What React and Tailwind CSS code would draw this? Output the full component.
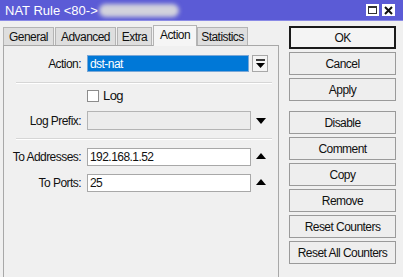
import React from 'react';

const tabs = [
  { name: 'General', w: 'w-[51px]' },
  { name: 'Advanced', w: 'w-[61px]' },
  { name: 'Extra', w: 'w-[35px]' },
  { name: 'Action', w: 'w-[44px]', active: true },
  { name: 'Statistics', w: 'w-[51px]' },
];

const buttons = ['OK', 'Cancel', 'Apply', 'Disable', 'Comment', 'Copy', 'Remove', 'Reset Counters', 'Reset All Counters'];

const TriDown = () => (
  <svg width="10" height="6" viewBox="0 0 10 6"><path d="M0 0h10L5 6z" fill="#000" /></svg>
);

const TriUp = () => (
  <svg width="10" height="6" viewBox="0 0 10 6"><path d="M0 6h10L5 0z" fill="#000" /></svg>
);

const Separator = () => (
  <div className="ml-[12px] mr-[6px] h-[2px] border-t border-[#d6d6d6] border-b-white border-b" />
);

const App = () => {
  return (
    <div className="w-[403px] h-[277px] bg-[#f0f0f0] flex flex-col overflow-hidden text-[12px] tracking-[-0.55px] text-[#111]" style={{ fontFamily: '"Liberation Sans", Arial, sans-serif' }}>
      {/* Title bar */}
      <div className="h-[21px] bg-[#5b5bd6] flex items-center pl-[5px] pr-[8px] border-b border-[#8a8ae6] shrink-0 tracking-normal">
        <span className="text-white text-[13px] leading-none">NAT Rule &lt;80-&gt;</span>
        <div className="ml-[1px] w-[80px] h-[13px] rounded-full bg-[#d2d2dc] blur-[2px]" />
        <div className="ml-auto flex gap-[3px]">
          <div className="w-[13px] h-[12px] bg-white flex items-center justify-center">
            <div className="w-[9px] h-[8px] border border-[#333] border-t-2" />
          </div>
          <div className="w-[13px] h-[12px] bg-white flex items-center justify-center">
            <svg width="9" height="9" viewBox="0 0 9 9"><path d="M1 1l7 7M8 1l-7 7" stroke="#111" strokeWidth="2" /></svg>
          </div>
        </div>
      </div>

      <div className="flex flex-1 min-h-0">
        {/* Left tabbed panel */}
        <div className="w-[279px] pl-[3px] pt-[3px] flex flex-col">
          <div className="flex items-end h-[21px]">
            {tabs.map(t => (
              <div
                key={t.name}
                className={`${t.w} flex items-center justify-center border border-[#b4b4b4] border-b-0 ${t.active ? 'h-[21px] bg-[#f5f5f5] pb-[3px] relative z-10 -mb-px' : 'h-[18px] bg-[#dedede] mr-[1px]'}`}
              >
                {t.name}
              </div>
            ))}
          </div>
          <div className="flex-1 border border-[#a8a8a8] border-b-0 bg-[#f0f0f0] flex flex-col">
            <div className="flex items-center mt-[9px] h-[17px]">
              <span className="w-[77px] text-right">Action:</span>
              <div className="ml-[6px] w-[162px] h-[17px] bg-[#0078d7] border border-[#7aa7d6] text-white flex items-center pl-[2px]">dst-nat</div>
              <div className="ml-[3px] w-[16px] h-[17px] border border-[#a8a8a8] bg-[#f4f4f4] flex items-center justify-center">
                <svg width="9" height="10" viewBox="0 0 9 10"><path d="M0 1h9" stroke="#000" strokeWidth="1.5" /><path d="M0 4h9L4.5 9z" fill="#000" /></svg>
              </div>
            </div>
            <div className="mt-[10px]"><Separator /></div>
            <div className="flex items-center mt-[5px] h-[14px]">
              <div className="ml-[83px] w-[12px] h-[12px] bg-white border border-[#8c8c8c]" />
              <span className="ml-[4px] text-[13px]">Log</span>
            </div>
            <div className="flex items-center mt-[8px] h-[19px]">
              <span className="w-[77px] text-right">Log Prefix:</span>
              <div className="ml-[6px] w-[164px] h-[19px] bg-[#ececec] border border-[#b4b4b4]" />
              <div className="ml-[5px]"><TriDown /></div>
            </div>
            <div className="mt-[8px]"><Separator /></div>
            <div className="flex items-center mt-[8px] h-[18px]">
              <span className="w-[77px] text-right">To Addresses:</span>
              <div className="ml-[6px] w-[164px] h-[18px] bg-white border border-[#a8a8a8] flex items-center pl-[2px]">192.168.1.52</div>
              <div className="ml-[5px] mb-[2px]"><TriUp /></div>
            </div>
            <div className="flex items-center mt-[8px] h-[18px]">
              <span className="w-[77px] text-right">To Ports:</span>
              <div className="ml-[6px] w-[164px] h-[18px] bg-white border border-[#a8a8a8] flex items-center pl-[2px]">25</div>
              <div className="ml-[5px] mb-[2px]"><TriUp /></div>
            </div>
          </div>
        </div>

        {/* Right button column */}
        <div className="ml-[10px] pt-[5px] flex flex-col">
          {buttons.map(b => (
            <div
              key={b}
              className={`w-[107px] h-[23px] flex items-center justify-center ${b === 'OK' ? 'border-2 border-[#1a1a1a] bg-[#f4f4f4]' : 'border border-[#9a9a9a] bg-[#eeeeee]'} ${b === 'Disable' ? 'mt-[10px]' : b === 'OK' ? '' : 'mt-[3px]'}`}
            >
              {b}
            </div>
          ))}
        </div>
      </div>
    </div>
  );
};

export default App;
